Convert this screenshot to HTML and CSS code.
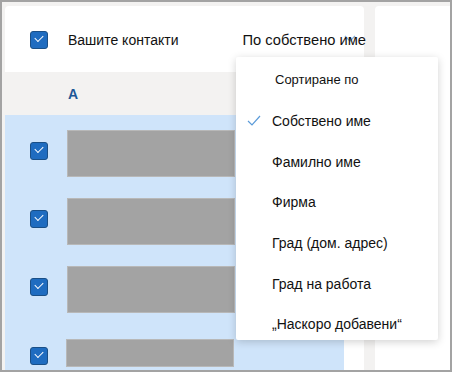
FILE: index.html
```html
<!DOCTYPE html>
<html lang="bg">
<head>
  <meta charset="UTF-8" />
  <meta name="viewport" content="width=device-width, initial-scale=1" />
  <title>Контакти</title>
  <link rel="stylesheet" href="styles.css">
</head>
<body>
  <div class="frame">
    <div class="main">
      <div class="header">
        <span class="checkbox"></span>
        <span class="title">Вашите контакти</span>
        <span class="sort">
          <svg class="chevron" width="12" height="8" viewBox="0 0 12 8"><path d="M1 1l5 5 5-5" fill="none" stroke="#86acd6" stroke-width="1.3"/></svg>
          <span class="sort-text">По собствено име</span>
        </span>
      </div>
      <div class="letter">A</div>
      <div class="list">
        <div class="selection">
          <div class="row">
            <span class="checkbox"></span>
            <span class="photo"></span>
          </div>
          <div class="row">
            <span class="checkbox"></span>
            <span class="photo"></span>
          </div>
          <div class="row">
            <span class="checkbox"></span>
            <span class="photo"></span>
          </div>
          <div class="row last">
            <span class="checkbox"></span>
            <span class="photo"></span>
          </div>
        </div>
      </div>
    </div>
    <div class="side"></div>

    <div class="menu">
      <div class="menu-title">Сортиране по</div>
      <div class="menu-item selected">
        <svg class="tick" width="14" height="11" viewBox="0 0 14 11"><path d="M1 6l4 4 8-9" fill="none" stroke="#5b9bd9" stroke-width="1.2"/></svg>
        Собствено име
      </div>
      <div class="menu-item">Фамилно име</div>
      <div class="menu-item">Фирма</div>
      <div class="menu-item">Град (дом. адрес)</div>
      <div class="menu-item">Град на работа</div>
      <div class="menu-item">„Наскоро добавени“</div>
    </div>
  </div>
</body>
</html>
```

FILE: styles.css
```css
body {
  margin: 0;
  font-family: 'Liberation Sans', Arial, sans-serif;
  color: #111;
}
.frame {
  position: relative;
  width: 452px;
  height: 372px;
  box-sizing: border-box;
  border: 2px solid #a3a3a3;
  background: #f3f2f1;
  display: flex;
  gap: 11px;
  padding: 4px 0 0 3px;
  overflow: hidden;
}
.main {
  width: 359px;
  display: flex;
  flex-direction: column;
}
.header {
  flex: none;
  height: 66px;
  background: #fff;
  border-radius: 4px 4px 0 0;
  display: flex;
  align-items: center;
  padding-left: 25px;
  padding-top: 2px;
  box-sizing: border-box;
  font-size: 14px;
}
.checkbox {
  width: 18px;
  height: 18px;
  flex: none;
  box-sizing: border-box;
  border: 1px solid #1a4f86;
  border-radius: 3px;
  background: #1f6cc0;
  position: relative;
}
.checkbox::after {
  content: '';
  position: absolute;
  left: 4px;
  top: 3px;
  width: 7px;
  height: 4px;
  border-left: 1.5px solid #fff;
  border-bottom: 1.5px solid #fff;
  transform: rotate(-45deg);
}
.title {
  margin-left: 20px;
}
.sort {
  position: relative;
  margin-left: auto;
  margin-right: -2px;
  font-size: 14.7px;
}
.chevron {
  position: absolute;
  right: 10px;
  top: 3px;
}
.sort-text {
  position: relative;
}
.letter {
  flex: none;
  height: 43px;
  display: flex;
  align-items: center;
  padding-left: 63px;
  font-size: 14px;
  font-weight: bold;
  color: #1d5797;
}
.list {
  flex: 1;
  min-height: 0;
  background: #fff;
  overflow: hidden;
}
.selection {
  width: 339px;
  height: 100%;
  background: #cfe4fa;
  padding: 15px 0 0 25px;
  box-sizing: border-box;
}
.row {
  height: 68px;
  display: flex;
  align-items: flex-start;
  gap: 19px;
}
.row .checkbox {
  margin-top: 12px;
}
.photo {
  width: 168px;
  height: 47px;
  box-sizing: border-box;
  background: #a3a3a3;
  border: 1px solid #b8b8b8;
}
.row.last .photo {
  height: 28px;
  margin-top: 5px;
  margin-left: -1px;
}
.row.last .checkbox {
  margin-top: 13px;
}
.side {
  flex: 1;
  background: #fff;
  border-radius: 4px 0 0 0;
}
.menu {
  position: absolute;
  left: 234px;
  top: 55px;
  width: 202px;
  height: 283px;
  background: #fff;
  border-radius: 2px;
  box-shadow: 0 2px 8px rgba(0, 0, 0, 0.18);
  font-size: 14px;
  overflow: hidden;
}
.menu-title {
  height: 44px;
  display: flex;
  align-items: center;
  padding-left: 39px;
  font-size: 13px;
}
.menu-item {
  height: 40.6px;
  display: flex;
  align-items: center;
  padding-left: 36px;
  position: relative;
}
.tick {
  position: absolute;
  left: 11px;
  top: 14px;
}
```
